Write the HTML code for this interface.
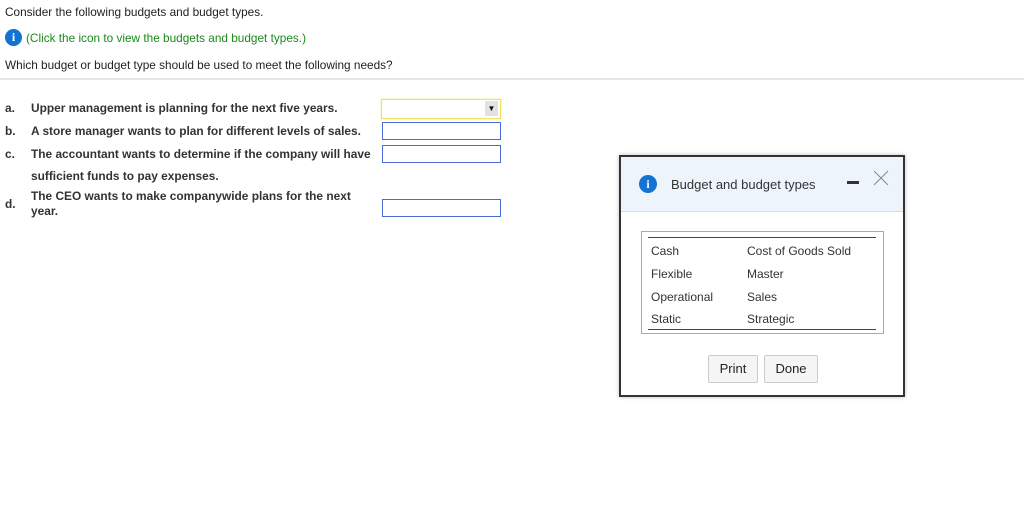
<!DOCTYPE html>
<html><head><meta charset="utf-8"><style>
body{margin:0;width:1024px;height:513px;background:#fff;font-family:"Liberation Sans",sans-serif;position:relative;overflow:hidden;color:#222}
.a{position:absolute;white-space:nowrap}
.t{font-size:12px}
.b{font-size:11.9px;font-weight:bold;color:#333}
.box{position:absolute;border:1px solid #4a6ad8;background:#fff;width:117px;height:16px}
.ic{position:absolute;border-radius:50%;background:#1273d4;color:#fff;font:bold 12px "Liberation Serif",serif;text-align:center}
</style></head><body>
<div class="a t" style="left:5px;top:5px;font-size:11.8px">Consider the following budgets and budget types.</div>
<div class="ic" style="left:5px;top:29px;width:17px;height:17px;line-height:17px">i</div>
<div class="a t" style="left:26px;top:31px;color:#1a8a1a;font-size:11.8px">(Click the icon to view the budgets and budget types.)</div>
<div class="a t" style="left:5px;top:58px;font-size:11.8px">Which budget or budget type should be used to meet the following needs?</div>
<div class="a" style="left:0;top:78px;width:1024px;height:2px;background:#e4e6ea"></div>

<div class="a b" style="left:5px;top:101px">a.</div><div class="a b" style="left:31px;top:101px">Upper management is planning for the next five years.</div>
<div class="a b" style="left:5px;top:124px">b.</div><div class="a b" style="left:31px;top:124px">A store manager wants to plan for different levels of sales.</div>
<div class="a b" style="left:5px;top:147px">c.</div><div class="a b" style="left:31px;top:147px">The accountant wants to determine if the company will have</div>
<div class="a b" style="left:31px;top:169px">sufficient funds to pay expenses.</div>
<div class="a b" style="left:5px;top:197px">d.</div><div class="a b" style="left:31px;top:189px">The CEO wants to make companywide plans for the next</div>
<div class="a b" style="left:31px;top:204px">year.</div>

<div class="a" style="left:381px;top:99px;width:118px;height:18px;border:1px solid #f2e060;box-shadow:0 0 2px #f5e87a;background:#fff"></div>
<div class="a" style="left:485px;top:101px;width:13px;height:15px;background:#e2e2e2;font-size:8px;text-align:center;line-height:15px;color:#111">&#9660;</div>
<div class="box" style="left:382px;top:122px"></div>
<div class="box" style="left:382px;top:145px"></div>
<div class="box" style="left:382px;top:199px"></div>

<div class="a" style="left:619px;top:155px;width:282px;height:238px;border:2px solid #333;background:#fff;box-shadow:0 0 4px #bbb">
 <div class="a" style="left:0;top:0;width:282px;height:54px;background:#eef4fb;border-bottom:1px solid #c9def2"></div>
 <div class="ic" style="left:18px;top:18px;width:18px;height:18px;line-height:18px">i</div>
 <div class="a" style="left:50px;top:20px;font-size:13px;color:#333">Budget and budget types</div>
 <div class="a" style="left:226px;top:24px;width:12px;height:3px;background:#333"></div>
 <svg class="a" style="left:252px;top:13px" width="16" height="16"><path d="M1 1L15 15M15 1L1 15" stroke="#888" stroke-width="1"/></svg>
 <div class="a" style="left:20px;top:74px;width:241px;height:101px;border:1px solid #aaa"></div>
 <div class="a" style="left:27px;top:80px;width:228px;height:1px;background:#444"></div>
 <div class="a" style="left:27px;top:172px;width:228px;height:1px;background:#444"></div>
 <div class="a t" style="left:30px;top:87px;color:#333">Cash</div><div class="a t" style="left:126px;top:87px;color:#333">Cost of Goods Sold</div>
 <div class="a t" style="left:30px;top:110px;color:#333">Flexible</div><div class="a t" style="left:126px;top:110px;color:#333">Master</div>
 <div class="a t" style="left:30px;top:133px;color:#333">Operational</div><div class="a t" style="left:126px;top:133px;color:#333">Sales</div>
 <div class="a t" style="left:30px;top:155px;color:#333">Static</div><div class="a t" style="left:126px;top:155px;color:#333">Strategic</div>
 <div class="a" style="left:87px;top:198px;width:48px;height:26px;border:1px solid #ccc;border-radius:2px;background:#f5f5f5;font-size:13px;text-align:center;line-height:26px">Print</div>
 <div class="a" style="left:143px;top:198px;width:52px;height:26px;border:1px solid #ccc;border-radius:2px;background:#f5f5f5;font-size:13px;text-align:center;line-height:26px">Done</div>
</div>
</body></html>
